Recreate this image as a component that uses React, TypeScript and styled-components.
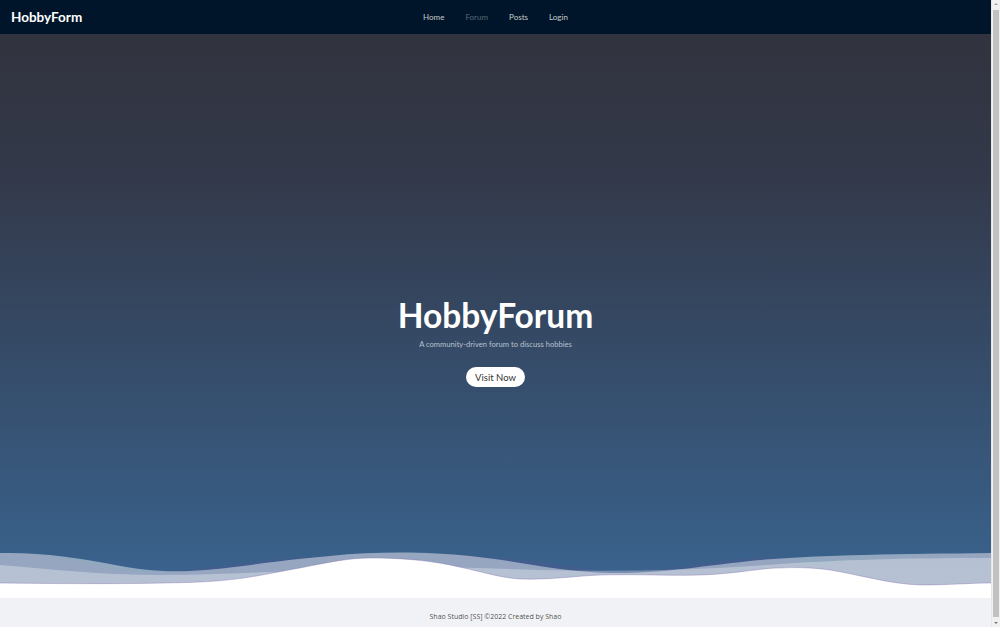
import React from 'react'
import styled, { createGlobalStyle } from 'styled-components'

const GlobalStyle = createGlobalStyle`
  html, body {
    margin: 0;
    padding: 0;
  }
  body {
    background: #f0f2f5;
    font-family: 'Lato', 'Open Sans', sans-serif;
  }
`

const Page = styled.div`
  margin-right: 9px;
`

// the browser window's scrollbar, as it shows in the shot
const ScrollTrack = styled.div`
  position: fixed;
  top: 0;
  right: 0;
  bottom: 0;
  width: 9px;
  display: flex;
  flex-direction: column;
  align-items: center;
  background: #f1f1f1;
  border-left: 1px solid #e6e6e6;
  box-sizing: border-box;
`

const ScrollArrow = styled.div<{ $down?: boolean }>`
  width: 0;
  height: 0;
  margin: 3px 0;
  border-left: 2px solid transparent;
  border-right: 2px solid transparent;
  ${(p) => (p.$down ? 'border-top: 2px solid #777;' : 'border-bottom: 2px solid #a3a3a3;')}
`

const ScrollThumb = styled.div`
  flex: 1;
  width: 6px;
  margin: 2px 0;
  background: #c1c1c1;
`

const Header = styled.header`
  display: grid;
  grid-template-columns: 1fr auto 1fr;
  align-items: center;
  height: 34px;
  padding: 0 11px;
  background: #001529;
`

const Logo = styled.div`
  color: #fff;
  font-size: 13.5px;
  font-weight: 700;
`

const Nav = styled.nav`
  display: flex;
  gap: 21px;
`

const NavLink = styled.a<{ $muted?: boolean }>`
  color: ${(p) => (p.$muted ? '#5b6777' : 'rgba(255, 255, 255, 0.78)')};
  font-size: 8px;
  text-decoration: none;
  cursor: pointer;
`

const Hero = styled.section`
  display: flex;
  flex-direction: column;
  height: 564px;
  background: linear-gradient(180deg, #31333e 0%, #33394a 25%, #354a66 55%, #3a6591 100%);
`

const HeroBody = styled.div`
  flex: 1;
  display: flex;
  flex-direction: column;
  align-items: center;
  padding-top: 261px;
`

const Title = styled.h1`
  margin: 0;
  color: #fff;
  font-size: 33.5px;
  font-weight: 700;
  line-height: 40px;
`

const Subtitle = styled.p`
  margin: 4px 0 0;
  color: #b7c1cf;
  font-size: 7.6px;
  line-height: 10px;
`

const VisitButton = styled.button`
  margin-top: 18px;
  width: 59px;
  height: 20px;
  border: none;
  border-radius: 10px;
  background: #fff;
  color: #333;
  font-family: inherit;
  font-size: 9.5px;
  cursor: pointer;
`

const Waves = styled.svg`
  display: block;
  width: 100%;
  height: 50px;
`

const Footer = styled.footer`
  padding: 13px 0 13px;
  text-align: center;
  color: rgba(0, 0, 0, 0.72);
  font-family: 'Open Sans', sans-serif;
  font-size: 7px;
  line-height: 12px;
`

const FRONT_EDGE =
  'M0,35 C80,36 150,36 200,34 C245,32 270,25 300,20 C330,14 350,10 370,10 C400,10 425,12 450,17 C480,23 500,30 520,31 C550,32 575,28 600,27 C640,26 670,28 700,27 C735,26 760,20 780,20 C800,19 815,20 830,22 C860,27 890,36 920,37 C950,37 970,35 991,35'

const WaveLayers = () => (
  <Waves viewBox="0 0 991 50" preserveAspectRatio="none">
    <path
      d="M0,5 C40,5 80,16 135,24 C170,25 220,18 260,13 C310,8 360,5 400,5 C450,5 500,9 550,15 C580,19 600,24 620,24 C660,23 700,14 750,10 C790,8 800,14 820,18 C840,14 880,9 920,7 C950,6 970,5 991,5 L991,50 L0,50 Z"
      fill="rgba(85, 85, 145, 0.3)"
    />
    <path
      d="M0,5 C40,4 80,10 110,16 C140,22 160,24 190,23 C230,21 270,13 330,8 C380,3 430,4 470,8 C520,13 560,24 610,25 C660,26 700,18 760,12 C820,7 900,6 991,5 L991,50 L0,50 Z"
      fill="rgba(255, 255, 255, 0.45)"
    />
    <path
      d="M0,17 C50,21 100,27 160,27 C220,27 260,24 320,22 C400,16 470,20 540,22 C620,24 700,22 780,16 C840,12 900,10 991,10 L991,50 L0,50 Z"
      fill="rgba(255, 255, 255, 0.3)"
    />
    <path d={`${FRONT_EDGE} L991,50 L0,50 Z`} fill="#fff" />
    <path
      d={FRONT_EDGE}
      fill="none"
      stroke="rgba(120, 100, 170, 0.35)"
      strokeWidth={1}
      vectorEffect="non-scaling-stroke"
    />
  </Waves>
)

const App = () => {
  return (
    <>
      <GlobalStyle />
      <Page>
        <Header>
          <Logo>HobbyForm</Logo>
          <Nav>
            <NavLink>Home</NavLink>
            <NavLink $muted>Forum</NavLink>
            <NavLink>Posts</NavLink>
            <NavLink>Login</NavLink>
          </Nav>
          <div />
        </Header>
        <Hero>
          <HeroBody>
            <Title>HobbyForum</Title>
            <Subtitle>A community-driven forum to discuss hobbies</Subtitle>
            <VisitButton>Visit Now</VisitButton>
          </HeroBody>
          <WaveLayers />
        </Hero>
        <Footer>Shao Studio [SS] ©2022 Created by Shao</Footer>
      </Page>
      <ScrollTrack>
        <ScrollArrow />
        <ScrollThumb />
        <ScrollArrow $down />
      </ScrollTrack>
    </>
  )
}

export default App
